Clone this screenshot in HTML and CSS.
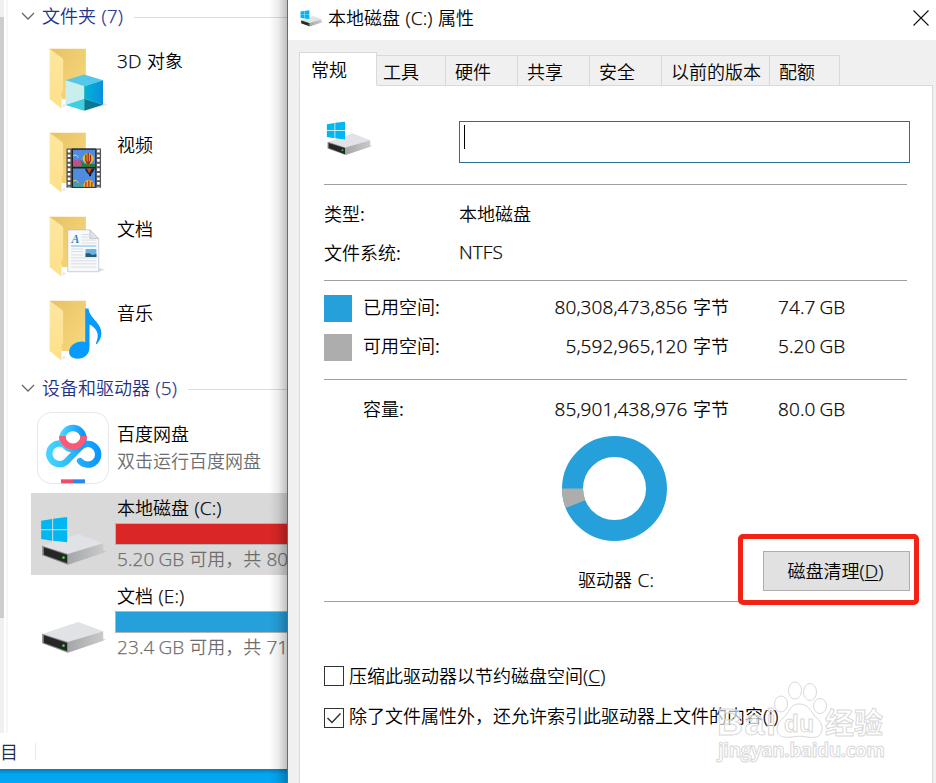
FILE: index.html
```html
<!DOCTYPE html>
<html lang="zh-CN">
<head>
  <meta charset="UTF-8" />
  <meta name="viewport" content="width=device-width, initial-scale=1.0" />
  <title>本地磁盘 (C:) 属性</title>
  <link rel="stylesheet" href="styles.css">
</head>
<body>

  <!-- Shared icon shapes -->
  <svg class="defs" width="0" height="0">
    <defs>
      <linearGradient id="gBack" x1="0" y1="0" x2="1" y2="1"><stop offset="0" stop-color="#e7c263"/><stop offset="1" stop-color="#f8d97f"/></linearGradient>
      <linearGradient id="gFlap" x1="0" y1="0" x2="0" y2="1"><stop offset="0" stop-color="#fce6a0"/><stop offset="1" stop-color="#ffe08a"/></linearGradient>
      <linearGradient id="gSide" x1="0" y1="0" x2="1" y2="0"><stop offset="0" stop-color="#a5a6a8"/><stop offset="1" stop-color="#c9cacc"/></linearGradient>
      <linearGradient id="gPan" x1="0" y1="0" x2="1" y2="0"><stop offset="0" stop-color="#44d4ff"/><stop offset="1" stop-color="#0c97fb"/></linearGradient>
      <linearGradient id="gCube" x1="0" y1="0" x2="1" y2="0"><stop offset="0" stop-color="#00b5d6"/><stop offset="1" stop-color="#0a8fe0"/></linearGradient>
    </defs>
    <symbol id="folder" viewBox="0 0 170 195">
      <path d="M5 4H115V157H42z" fill="url(#gBack)"/>
      <path d="M42 182l13-4-8-8z" fill="#ddd" opacity=".7"/>
      <path d="M5 4l38 28q3 3 3 7v91l-5 10v46L5 157z" fill="url(#gFlap)"/>
    </symbol>
    <symbol id="drive" viewBox="120 348 200 150">
      <path d="M203 494L318 455 300 446 203 478z" fill="#888" opacity=".25"/>
      <path d="M126 438L234 402 309 430 203 463z" fill="#e1e2e6"/>
      <path d="M203 462L309 430V458L203 494z" fill="url(#gSide)"/>
      <path d="M126 437L203 462V494L126 466z" fill="#88898b"/>
      <path d="M131 442L201 465V490L131 464z" fill="#262626"/>
      <circle cx="190" cy="473" r="4" fill="#38dd32"/>
    </symbol>
    <symbol id="winlogo" viewBox="120 348 200 150">
      <path d="M123 362l33-5v31h-33zM159 356l42-5v37h-42zM123 391h33v31l-33-5zM159 391h42v36l-42-5z" fill="#00b7f1"/>
    </symbol>
  </svg>

  <div class="screen">
    <!-- File explorer behind the dialog -->
    <div class="explorer">
      <div class="explorer-main">
        <div class="scrollbar"><div class="thumb"></div></div>
        <div class="files">
          <div class="group">
            <svg class="chevron" viewBox="0 0 14 8"><path d="M1 1l6 6 6-6"/></svg>
            <span>文件夹 <b class="lat">(7)</b></span><i></i>
          </div>

          <div class="folder-row">
            <svg class="folder" viewBox="0 0 170 195">
              <use href="#folder"/>
              <path d="M110 192l70-17-13-10z" fill="#ccc" opacity=".5"/>
              <path d="M53 100L110 82 167 100 110 118z" fill="#53c8e8"/>
              <path d="M53 100L110 118V156L53 175z" fill="#c9eeee"/>
              <path d="M167 100L110 118V156L167 174z" fill="url(#gCube)"/>
              <path d="M53 175L110 156V192z" fill="#3dd1e0"/>
              <path d="M110 156L167 174 110 192z" fill="#087995"/>
            </svg>
            <span class="name"><b class="lat">3D</b> 对象</span>
          </div>

          <div class="folder-row">
            <svg class="folder" viewBox="0 0 170 195">
              <use href="#folder"/>
              <path d="M56 52H161V171H56z" fill="#55565a"/>
              <path d="M64 56V170M153 56V170" stroke="#fff" stroke-width="8" stroke-dasharray="8 6"/>
              <path d="M72 52H145V171H72z" fill="#222"/>
              <path d="M76 56H143V108H76zM76 113H143V168H76z" fill="#4d8ce0"/>
              <path d="M76 93l12 3 12-9 10 12h33v9H76z" fill="#277a3d"/>
              <path d="M76 90l8-5 7 5 5-7 6 12v11H76z" fill="#c24e89"/>
              <path d="M76 74q12-6 16 6M76 151q12-6 16 6" stroke="#e8dc48" stroke-width="3" fill="none"/>
              <path d="M76 168v-9l8 2 10-5 14 6v6z" fill="#4aa0a0"/>
              <path d="M105 82a17 16 0 0 1 34 0q0 8-12 18h-9q-13-10-13-18z" fill="#e9b92c"/>
              <path d="M115 70v18l5 11M129 70v18l-5 11M122 66v34" stroke="#9d2620" stroke-width="4" fill="none"/>
              <path d="M112 113h30q-3 12-13 18h-5q-9-6-12-18z" fill="#27222a"/>
              <path d="M118 113l7 15 8-15z" fill="#d44827"/>
              <path d="M125 128h6v8h-6z" fill="#111"/>
              <path d="M107 168a17 21 0 0 1 34 0z" fill="#e8b528"/>
              <path d="M115 168v-14M124 168v-19M133 168v-14" stroke="#c03122" stroke-width="4"/>
            </svg>
            <span class="name">视频</span>
          </div>

          <div class="folder-row">
            <svg class="folder" viewBox="0 0 170 195">
              <use href="#folder"/>
              <path d="M154 171l18-7-18-4z" fill="#ccc" opacity=".7"/>
              <path d="M60 44H127L154 72V171H60z" fill="#f8f9fb" stroke="#b5b8be" stroke-width="2"/>
              <path d="M127 44V70H154z" fill="#dfe2e7" stroke="#b5b8be" stroke-width="2"/>
              <path d="M102 58h22M102 66h22M102 75h45M102 84h45M70 102h37M70 110h37M70 120h37M70 129h77M70 138h77M70 147h77M70 157h77" stroke="#c8d0d8" stroke-width="2"/>
              <path d="M70 93h77" stroke="#75b9dc" stroke-width="3"/>
              <path d="M114 102h33v24h-33z" fill="#65b3e4"/>
              <path d="M114 115l12 0 8 5 13-3v9h-33z" fill="#285b70"/>
              <text class="doc-letter" x="71" y="85">A</text>
            </svg>
            <span class="name">文档</span>
          </div>

          <div class="folder-row">
            <svg class="folder" viewBox="0 0 170 195">
              <use href="#folder"/>
              <path d="M113 28h10c4 32 39 42 39 75q0 17-14 33l-3-1q10-24 3-38-7-14-22-21v70c0 21-16 34-37 34-16 0-25-8-25-20 0-18 19-32 40-32q6 0 9 2z" fill="#079aff"/>
            </svg>
            <span class="name">音乐</span>
          </div>

          <div class="group devices">
            <svg class="chevron" viewBox="0 0 14 8"><path d="M1 1l6 6 6-6"/></svg>
            <span>设备和驱动器 <b class="lat">(5)</b></span><i></i>
          </div>

          <div class="drive-row baidu">
            <div class="drive-icon">
              <svg class="pan" viewBox="0 0 216 216">
                <rect x="1.5" y="1.5" width="213" height="213" rx="42" fill="#fff" stroke="#e6e7eb" stroke-width="3"/>
                <g fill="none" stroke-width="19">
                  <path d="M92 106A31 31 0 1 0 89 148L128 108A31 31 0 1 1 129 147" stroke="url(#gPan)" stroke-linecap="round"/>
                  <circle cx="108" cy="80" r="32" stroke="url(#gPan)"/>
                  <path d="M76 72A32 32 0 1 0 140 72" stroke="#fa5a78"/>
                </g>
                <path d="M72 202h36v12H72z" fill="#f24c6c"/><path d="M108 202h36v12h-36z" fill="#268af0"/>
              </svg>
            </div>
            <div class="drive-info">
              <span class="name">百度网盘</span>
              <span class="sub">双击运行百度网盘</span>
            </div>
          </div>

          <div class="drive-row selected">
            <div class="drive-icon"><svg class="disk"><use href="#drive"/><use href="#winlogo"/></svg></div>
            <div class="drive-info">
              <span class="name">本地磁盘 <b class="lat">(C:)</b></span>
              <div class="bar full"></div>
              <span class="sub"><b class="lat">5.20 GB</b> 可用，共 <b class="lat">80</b></span>
            </div>
          </div>

          <div class="drive-row">
            <div class="drive-icon"><svg class="disk"><use href="#drive"/></svg></div>
            <div class="drive-info">
              <span class="name">文档 <b class="lat">(E:)</b></span>
              <div class="bar"></div>
              <span class="sub"><b class="lat">23.4 GB</b> 可用，共 <b class="lat">71</b></span>
            </div>
          </div>
        </div>
      </div>
      <div class="statusbar"><span>目</span><i></i></div>
      <div class="taskbar"></div>
      <div class="shade"></div>
    </div>

    <!-- Properties dialog -->
    <div class="dialog">
      <div class="titlebar">
        <svg class="title-icon"><use href="#drive"/><use href="#winlogo"/></svg>
        <span>本地磁盘 <b class="lat">(C:)</b> 属性</span>
        <svg class="close" viewBox="0 0 16 16"><path d="M.5.5l15 15M15.5.5l-15 15"/></svg>
      </div>

      <div class="tabs">
        <div class="tab active">常规</div>
        <div class="tab t1">工具</div>
        <div class="tab">硬件</div>
        <div class="tab">共享</div>
        <div class="tab">安全</div>
        <div class="tab wide">以前的版本</div>
        <div class="tab last">配额</div>
      </div>

      <div class="panel">
        <div class="label-row">
          <svg class="label-icon"><use href="#drive"/><use href="#winlogo"/></svg>
          <div class="label-input"><i></i></div>
        </div>

        <div class="props">
          <span>类型:</span><span>本地磁盘</span>
          <span>文件系统:</span><span class="lat">NTFS</span>
        </div>

        <div class="space">
          <i class="used"></i><span>已用空间:</span><span class="bytes"><b class="lat">80,308,473,856</b> 字节</span><span class="lat">74.7 GB</span>
          <i class="free"></i><span>可用空间:</span><span class="bytes"><b class="lat">5,592,965,120</b> 字节</span><span class="lat">5.20 GB</span>
        </div>

        <div class="capacity">
          <div class="space total">
            <span></span><span>容量:</span><span class="bytes"><b class="lat">85,901,438,976</b> 字节</span><span class="lat">80.0 GB</span>
          </div>
          <div class="chart-row">
            <div class="chart">
              <svg class="donut" viewBox="0 0 105 105">
                <circle cx="52.5" cy="52.5" r="42" stroke="#26a0da"/>
                <circle cx="52.5" cy="52.5" r="42" stroke="#adadad" stroke-dasharray="16 300" transform="rotate(158.2 52.5 52.5)"/>
              </svg>
              <span>驱动器 <b class="lat">C:</b></span>
            </div>
            <div class="cleanup">磁盘清理<b class="lat">(<u>D</u>)</b></div>
          </div>
        </div>

        <div class="checks">
          <div class="check"><i></i><span>压缩此驱动器以节约磁盘空间<b class="lat">(<u>C</u>)</b></span></div>
          <div class="check">
            <i><svg viewBox="0 0 18 18"><path d="M2.5 9l4.5 4.5 8.500-9"/></svg></i>
            <span>除了文件属性外，还允许索引此驱动器上文件的内容<b class="lat">(<u>I</u>)</b></span>
          </div>
        </div>
      </div>
    </div>

    <div class="highlight"></div>

    <svg class="watermark" viewBox="0 0 176 90">
      <g class="mark">
        <ellipse cx="65" cy="32" rx="6.500" ry="8"/>
        <ellipse cx="79" cy="18.500" rx="6.500" ry="8.500"/>
        <ellipse cx="94" cy="20" rx="6.500" ry="8.500"/>
        <ellipse cx="104" cy="34" rx="6.500" ry="7.500"/>
        <path d="M83 32c8 0 11 5 15 11 5 6 9 8 8 15-1 8-8 8-15 7-6-1-9-1-15 0-8 1-15 0-15-8 0-6 4-9 9-14 4-5 5-11 13-11z"/>
        <text x="1" y="63" class="wm-big" textLength="59">Bai</text>
        <text x="68" y="60" class="wm-du" textLength="30">du</text>
        <text x="109" y="62" class="wm-cn">经验</text>
        <text x="2" y="85" class="wm-url" textLength="167">jingyan.baidu.com</text>
      </g>
    </svg>
  </div>

</body>
</html>
```

FILE: styles.css
```css
* { box-sizing: border-box; margin: 0; padding: 0; }

html, body {
  height: 100%;
  overflow: hidden;
}

body {
  font-family: "Noto Sans CJK SC", sans-serif;
  font-size: 18px;
  font-weight: 350;
  line-height: 26px;
  word-spacing: 1.5px;
  color: #000;
  white-space: nowrap;
}

.lat {
  font-family: "Open Sans", "Noto Sans", sans-serif;
  font-size: 19px;
  font-weight: 350;
  line-height: 20px;
  letter-spacing: .1px;
  word-spacing: -1px;
  -webkit-text-stroke: .25px currentColor;
}

i { display: block; }

u { text-decoration-thickness: 1px; text-underline-offset: 2px; }

.defs { position: absolute; }

.screen {
  position: relative;
  width: 936px;
  height: 783px;
  display: flex;
  overflow: hidden;
}

/* explorer */
.explorer {
  position: relative;
  width: 287px;
  display: flex;
  flex-direction: column;
  background: #fff;
  overflow: hidden;
}

.explorer-main {
  height: 733px;
  display: flex;
}

.scrollbar {
  width: 4px;
  background: #f0f0f0;
  padding-top: 17px;
}

.thumb { height: 601px; background: #cdcdcd; }

.files {
  flex: 1;
  min-width: 0;
  margin-left: 2px;
  border-left: 2px solid #f6f6f6;
  padding-top: 4px;
}

.group {
  height: 26px;
  display: flex;
  align-items: center;
  padding-left: 13px;
  color: #1e3287;
}

.group span { padding-bottom: 4px; }

.group i {
  flex: 1;
  height: 1px;
  margin-left: 11px;
  background: #dcdcdc;
}

.chevron {
  width: 14px;
  height: 8px;
  margin: 0 7px 2px 0;
  fill: none;
  stroke: #666;
  stroke-width: 1.3;
}

.folder-row {
  height: 84px;
  display: flex;
  padding: 8px 0 0 40px;
}

.group + .folder-row { margin-top: 9px; }

.folder {
  width: 56px;
  height: 65px;
  margin-right: 13px;
  overflow: visible;
}

.doc-letter {
  font: italic bold 36px "Liberation Serif", serif;
  fill: #2d89b8;
}

.devices { margin-top: 1px; }

.drive-row {
  height: 82px;
  margin: 0 0 6px 23px;
  display: flex;
}

.devices + .drive-row { margin-top: 3px; }

.selected { background: #d9d9d9; }

.drive-icon { width: 84px; padding: 23px 0 0 9px; }

.disk { width: 67px; height: 50px; }

.baidu .drive-icon { padding: 7px 0 0 6px; }

.pan { width: 72px; height: 72px; }

.drive-info {
  flex: 1;
  min-width: 0;
  display: flex;
  flex-direction: column;
}

.drive-info .name, .drive-info .sub { padding-left: 2px; }

.drive-info .name { margin-top: 1px; }

.sub { color: #6d6d6d; word-spacing: 1px; }

.baidu .name { margin-top: 15px; }
.baidu .sub { margin-top: 1px; }

.bar {
  height: 22px;
  margin: 3px 0 0;
  border: 1px solid #b4b4b4;
  border-right: 0;
  background: #26a0da;
  flex: none;
}

.bar.full { background: #da2626; }

.statusbar {
  height: 36px;
  display: flex;
  align-items: center;
  gap: 17px;
  color: #1c2c4e;
}

.statusbar i { width: 1px; height: 17px; background: #e8e8e8; }

.taskbar {
  flex: 1;
  background: linear-gradient(#087cb8, #04a4f0 5px, #00a9f7);
}

.shade {
  position: absolute;
  top: 0;
  right: 0;
  bottom: 0;
  width: 18px;
  background: linear-gradient(to right, rgba(0,0,0,0), rgba(0,0,0,.07) 50%, rgba(0,0,0,.25));
}

/* dialog */
.dialog {
  width: 649px;
  border-left: 1px solid #6a6a6a;
  background: #f0f0f0;
  display: flex;
  flex-direction: column;
}

.titlebar {
  height: 40px;
  background: #fff;
  display: flex;
  align-items: center;
  padding: 0 7px 4px 12px;
}

.titlebar span { padding-bottom: 2px; }

.title-icon { width: 23px; height: 17px; margin-right: 5px; }

.close {
  width: 16px;
  height: 16px;
  margin-left: auto;
  fill: none;
  stroke: #111;
  stroke-width: 1.1;
}

.tabs {
  height: 34px;
  margin: 12px 0 -1px 11px;
  display: flex;
  align-items: flex-end;
}

.tab {
  width: 72px;
  height: 31px;
  border: 1px solid #d9d9d9;
  border-left: 0;
  padding: 2px 0 0 9px;
}

.tab.active {
  position: relative;
  z-index: 1;
  width: 78px;
  height: 34px;
  background: #fff;
  border-left: 1px solid #d9d9d9;
  border-bottom-color: #fff;
  padding: 3px 0 0 11px;
}

.tab.t1 { width: 69px; padding-left: 6px; }
.tab.wide { width: 108px; }
.tab.last { width: 70px; }

.panel {
  flex: 1;
  margin: 0 3px 0 11px;
  border: 1px solid #d9d9d9;
  border-bottom: 0;
  background: #fff;
  padding: 0 25px 0 24px;
}

.label-row {
  height: 99px;
  display: flex;
  align-items: flex-start;
  padding-top: 36px;
  border-bottom: 1px solid #a0a0a0;
}

.label-icon { width: 49px; height: 35px; margin: -1px 0 0 1px; }

.label-input {
  width: 451px;
  height: 42px;
  margin: -1px -3px 0 85px;
  flex: none;
  border: 1px solid #2a6d8f;
  padding: 3px 0 0 4px;
}

.label-input i { width: 1px; height: 24px; background: #000; }

.props {
  height: 96px;
  display: grid;
  grid-template-columns: 135px 1fr;
  grid-auto-rows: 39px;
  align-items: center;
  padding-top: 8px;
  border-bottom: 1px solid #a0a0a0;
}

.space {
  height: 99px;
  display: grid;
  grid-template-columns: 39px 140px 226px 1fr;
  grid-auto-rows: 39px;
  align-items: center;
  padding-top: 5px;
  border-bottom: 1px solid #a0a0a0;
}

.space i { width: 28px; height: 27px; margin-top: 6px; }

.used { background: #26a0da; }
.free { background: #adadad; }

.bytes { text-align: right; }

.bytes + .lat { padding: 2px 0 0 49px; }

.capacity {
  height: 222px;
  border-bottom: 1px solid #a0a0a0;
}

.space.total {
  height: 56px;
  padding-top: 8px;
  border: 0;
}

.chart-row { display: flex; }

.chart {
  width: 105px;
  margin-left: 238px;
  display: flex;
  flex-direction: column;
  align-items: center;
  gap: 25px;
}

.chart span { padding-left: 3px; }

.donut {
  width: 105px;
  height: 105px;
  fill: none;
  stroke-width: 21;
}

.cleanup {
  width: 147px;
  height: 40px;
  flex: none;
  margin: 115px 0 0 96px;
  border: 1px solid #adadad;
  background: #e1e1e1;
  text-align: center;
  line-height: 36px;
  padding-right: 2px;
}

.checks {
  padding-top: 61px;
  display: flex;
  flex-direction: column;
  gap: 14px;
}

.check {
  height: 26px;
  display: flex;
  align-items: center;
  gap: 5px;
}

.check span { padding-bottom: 2px; }

.check > i {
  width: 20px;
  height: 20px;
  border: 1px solid #333;
}

.check + .check > i { margin-top: 3px; }

.check svg {
  display: block;
  width: 18px;
  height: 18px;
  fill: none;
  stroke: #333;
  stroke-width: 1.5;
}

/* red frame around the cleanup button */
.highlight {
  position: absolute;
  left: 738px;
  top: 534px;
  width: 181px;
  height: 71px;
  border: 5px solid #f22314;
  border-radius: 5px;
}

.watermark {
  position: absolute;
  left: 716px;
  top: 672px;
  width: 176px;
  height: 90px;
  overflow: visible;
}

.mark {
  fill: rgba(255,255,255,.65);
  stroke: #d9d9d9;
  stroke-width: 1;
}

.wm-big { font: bold 36px "Liberation Sans", sans-serif; }
.wm-du { font: bold 24px "Liberation Sans", sans-serif; }
.wm-cn { font: bold 29px "Noto Sans CJK SC", sans-serif; }
.wm-url { font: bold 19px "Open Sans", sans-serif; }
```
